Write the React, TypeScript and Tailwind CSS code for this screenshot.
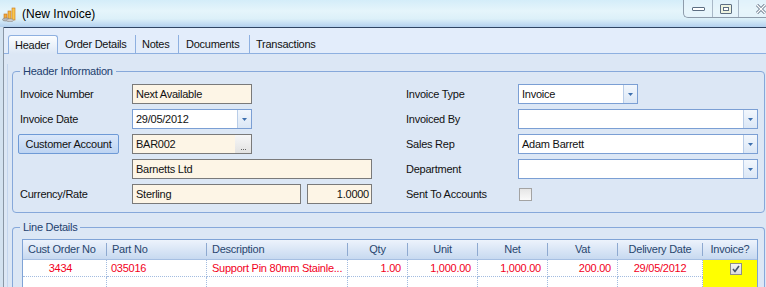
const ui = "[font-family:'Liberation_Sans',Arial,sans-serif] text-[11px] tracking-[-0.25px] text-[#111]";

function Caret() {
  return (
    <svg width="5" height="3" viewBox="0 0 5 3" aria-hidden="true">
      <path d="M0 0h5L2.5 3z" fill="#3d6fae" />
    </svg>
  );
}

function DropButton() {
  return (
    <div className="flex w-[14px] shrink-0 items-center justify-center border-l border-[#b9cde8] bg-[linear-gradient(#f2f7fd,#dbe7f6)]">
      <Caret />
    </div>
  );
}

function Combo({ value = "", width }: { value?: string; width: string }) {
  return (
    <div className={`flex h-[20px] border border-[#7b9fd4] bg-white ${width}`}>
      <span className="flex-1 truncate pl-[3px] leading-[18px]">{value}</span>
      <DropButton />
    </div>
  );
}

function Field({
  value,
  width,
  right = false,
  browse = false,
}: {
  value: string;
  width: string;
  right?: boolean;
  browse?: boolean;
}) {
  return (
    <div className={`flex h-[20px] border border-[#7a7a7a] bg-[#fdf5e6] ${width}`}>
      <span className={`flex-1 truncate leading-[18px] ${right ? "pr-[2px] text-right" : "pl-[3px]"}`}>
        {value}
      </span>
      {browse && (
        <div className="flex w-[16px] items-end justify-center bg-[linear-gradient(#f7f7f7,#e2e2e2)] pb-[3px]">
          <div className="flex gap-[1px]">
            <span className="h-px w-px bg-[#666]" />
            <span className="h-px w-px bg-[#666]" />
            <span className="h-px w-px bg-[#666]" />
          </div>
        </div>
      )}
    </div>
  );
}

function Row({ label, children }: { label?: React.ReactNode; children: React.ReactNode }) {
  return (
    <div className="flex h-[20px] items-center">
      <div className="w-[112px] shrink-0">{label}</div>
      {children}
    </div>
  );
}

function TitleIcon() {
  return (
    <svg width="17" height="16" viewBox="0 0 17 16" aria-hidden="true">
      <rect x="2" y="8" width="3" height="6" fill="#f2a93b" stroke="#c7761a" strokeWidth="0.6" />
      <rect x="6" y="5" width="3" height="9" fill="#f6b942" stroke="#c7761a" strokeWidth="0.6" />
      <rect x="10" y="2" width="3" height="12" fill="#f9c74f" stroke="#c7761a" strokeWidth="0.6" />
      <ellipse cx="4" cy="13.5" rx="3.5" ry="1.6" fill="#b9b9b9" stroke="#7c7c7c" strokeWidth="0.5" />
      <ellipse cx="8" cy="14.2" rx="3.5" ry="1.5" fill="#cfcfcf" stroke="#7c7c7c" strokeWidth="0.5" />
    </svg>
  );
}

const cols = [
  { title: "Cust Order No", w: "w-[84px]", h: "pl-[5px] text-left", v: "3434", a: "text-center pr-[8px]" },
  { title: "Part No", w: "w-[100px]", h: "pl-[5px] text-left", v: "035016", a: "pl-[4px] text-left" },
  { title: "Description", w: "w-[141px]", h: "pl-[5px] text-left", v: "Support Pin 80mm Stainle...", a: "pl-[5px] text-left" },
  { title: "Qty", w: "w-[60px]", h: "text-center", v: "1.00", a: "pr-[6px] text-right" },
  { title: "Unit", w: "w-[70px]", h: "text-center", v: "1,000.00", a: "pr-[6px] text-right" },
  { title: "Net", w: "w-[70px]", h: "text-center", v: "1,000.00", a: "pr-[6px] text-right" },
  { title: "Vat", w: "w-[70px]", h: "text-center", v: "200.00", a: "pr-[6px] text-right" },
  { title: "Delivery Date", w: "w-[85px]", h: "text-center", v: "29/05/2012", a: "text-center" },
];

export default function App() {
  return (
    <div className={`flex h-[287px] w-[766px] flex-col overflow-hidden bg-[#d3e2f0] ${ui}`}>
      {/* title bar */}
      <div className="flex h-[27px] shrink-0 bg-[linear-gradient(180deg,#d4edf9_0%,#e5f5fb_40%,#dcf0f9_70%,#b3d0ee_100%)]">
        <div className="flex flex-1 items-center pl-[2px]">
          <TitleIcon />
          <span className="ml-[3px] text-[12px] tracking-normal text-black">(New Invoice)</span>
        </div>
        <div className="flex h-[18px] self-start rounded-bl-[5px] border-b border-l border-[#8e9cab] bg-[#e9f5fb]/60">
          <div className="flex w-[28px] items-center justify-center pt-[1px]">
            <div className="h-[4px] w-[13px] rounded-[1px] border border-[#5d6e82] bg-white" />
          </div>
          <div className="flex w-[26px] items-center justify-center border-l border-[#a9b8c7]">
            <div className="flex h-[10px] w-[12px] items-center justify-center rounded-[1px] border border-[#5d6e82] bg-[#eef3df]">
              <div className="h-[4px] w-[6px] border border-[#5d6e82] bg-white" />
            </div>
          </div>
          <div className="flex w-[28px] items-center justify-end border-l border-[#a9b8c7]">
            <svg width="10" height="10" viewBox="0 0 10 10" aria-hidden="true">
              <path d="M1 1l8 8M9 1L1 9" stroke="#5d6e82" strokeWidth="3" />
              <path d="M1 1l8 8M9 1L1 9" stroke="#fff" strokeWidth="1.4" />
            </svg>
          </div>
        </div>
      </div>

      <div className="flex flex-1 pl-[3px]">
        <div className="flex flex-1 flex-col border-l border-[#8a97a5] bg-[#dce7f5]">
          <div className="h-px bg-[#2f4462]" />
          {/* tab strip */}
          <div className="flex h-[26px] items-end border-b border-[#8eb0e0] bg-[#e3edfb] pl-[4px]">
            <div className="-mb-px flex h-[19px] w-[50px] items-center rounded-t-[3px] border border-b-0 border-[#8eb0e0] bg-[linear-gradient(#fbfdff,#dce7f5)] pl-[6px]">
              Header
            </div>
            <div className="flex h-[18px] w-[77px] items-center pl-[7px]">Order Details</div>
            <div className="h-[18px] w-px bg-[#8eb0e0]" />
            <div className="flex h-[18px] w-[42px] items-center pl-[6px]">Notes</div>
            <div className="h-[18px] w-px bg-[#8eb0e0]" />
            <div className="flex h-[18px] w-[70px] items-center pl-[7px]">Documents</div>
            <div className="h-[18px] w-px bg-[#8eb0e0]" />
            <div className="flex h-[18px] items-center pl-[6px]">Transactions</div>
          </div>

          {/* tab page */}
          <div className="flex flex-1 flex-col pt-[10px] pl-[3px]">
            <div className="flex flex-1 flex-col border-l border-[#c4d6ee] pl-[4px]">
              <fieldset className="mr-[2px] rounded-[4px] border border-[#86a8da] pt-[6px] pr-[6px] pb-[8px] pl-[7px]">
                <legend className="px-[3px] leading-[14px] text-[#23416f]">Header Information</legend>
                <div className="flex gap-[34px]">
                  <div className="flex flex-col gap-[5px]">
                    <Row label="Invoice Number">
                      <Field value="Next Available" width="w-[120px]" />
                    </Row>
                    <Row label="Invoice Date">
                      <Combo value="29/05/2012" width="w-[120px]" />
                    </Row>
                    <Row
                      label={
                        <div className="-ml-[2px] flex h-[20px] w-[101px] items-center justify-center rounded-[2px] border border-[#6e9ad6] bg-[linear-gradient(#dbe8fa,#bdd4f2)]">
                          Customer Account
                        </div>
                      }
                    >
                      <Field value="BAR002" width="w-[120px]" browse />
                    </Row>
                    <Row>
                      <Field value="Barnetts Ltd" width="w-[240px]" />
                    </Row>
                    <Row label="Currency/Rate">
                      <div className="flex gap-[6px]">
                        <Field value="Sterling" width="w-[169px]" />
                        <Field value="1.0000" width="w-[65px]" right />
                      </div>
                    </Row>
                  </div>
                  <div className="flex flex-col gap-[5px]">
                    <Row label="Invoice Type">
                      <Combo value="Invoice" width="w-[120px]" />
                    </Row>
                    <Row label="Invoiced By">
                      <Combo width="w-[240px]" />
                    </Row>
                    <Row label="Sales Rep">
                      <Combo value="Adam Barrett" width="w-[240px]" />
                    </Row>
                    <Row label="Department">
                      <Combo width="w-[240px]" />
                    </Row>
                    <Row label="Sent To Accounts">
                      <div className="ml-[1px] h-[13px] w-[13px] border border-[#a3a3a3] bg-[linear-gradient(#e6e6e6,#fafafa)]" />
                    </Row>
                  </div>
                </div>
              </fieldset>

              <fieldset className="mt-[7px] mr-[2px] flex-1 rounded-t-[4px] border border-b-0 border-[#86a8da] pt-[5px] pr-[6px] pl-[7px]">
                <legend className="px-[3px] leading-[14px] text-[#23416f]">Line Details</legend>
                <div className="ml-[2px] w-[736px] border-x border-t border-[#7fa3d6] bg-white">
                  <div className="flex border-b border-[#a6bfe2] bg-[linear-gradient(#edf3fc,#c7d9f0)] text-[#28466f]">
                    {cols.map((c) => (
                      <div key={c.title} className={`flex h-[19px] items-center ${c.w}`}>
                        <span className={`flex-1 truncate ${c.h}`}>{c.title}</span>
                        <div className="h-[13px] w-px bg-[#8ea9d0]" />
                      </div>
                    ))}
                    <div className="flex h-[19px] w-[54px] items-center justify-center">Invoice?</div>
                  </div>
                  <div className="flex text-[#f2001c]">
                    {cols.map((c) => (
                      <div
                        key={c.title}
                        className={`h-[17px] truncate border-r border-b border-dotted border-[#a3bce0] leading-[16px] ${c.w} ${c.a}`}
                      >
                        {c.v}
                      </div>
                    ))}
                    <div className="flex h-[17px] w-[54px] items-center bg-[#ffff00] pl-[27px]">
                      <div className="flex h-[12px] w-[12px] items-center justify-center border border-[#8d8d8d] bg-[linear-gradient(#f4f4f4,#dcdcdc)]">
                        <svg width="8" height="8" viewBox="0 0 8 8" aria-hidden="true">
                          <path d="M1 4l2 2.5L7 1" stroke="#45556c" strokeWidth="1.6" fill="none" />
                        </svg>
                      </div>
                    </div>
                  </div>
                  <div className="flex">
                    {cols.map((c) => (
                      <div key={c.title} className={`h-[20px] border-r border-dotted border-[#a3bce0] ${c.w}`} />
                    ))}
                    <div className="h-[20px] w-[54px] bg-[#ffff00]" />
                  </div>
                </div>
              </fieldset>
            </div>
          </div>
        </div>
      </div>
    </div>
  );
}
